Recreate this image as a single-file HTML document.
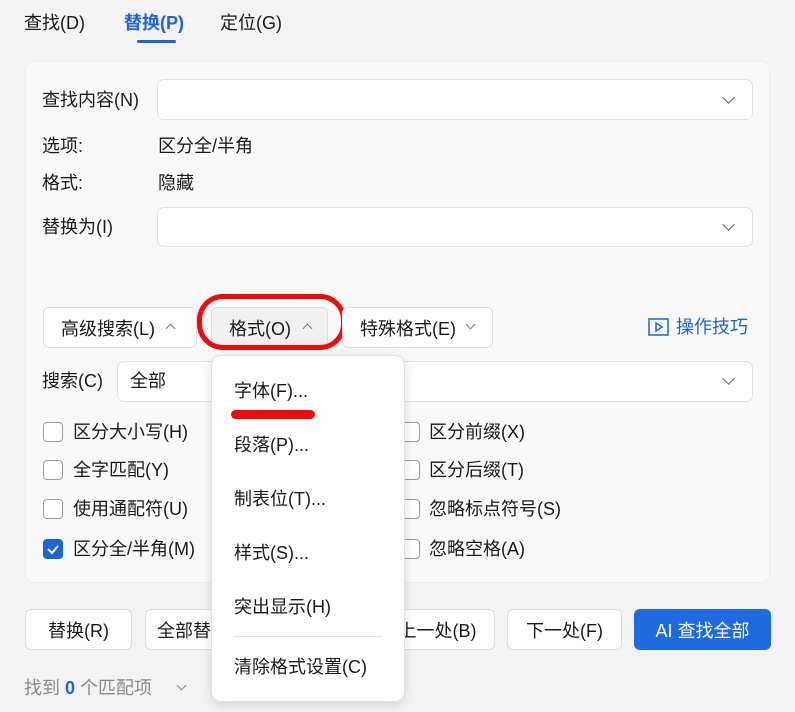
<!DOCTYPE html>
<html><head><meta charset="utf-8"><style>
*{box-sizing:border-box;margin:0;padding:0}
body{width:795px;height:712px;background:#f3f3f3;font-family:"Liberation Sans","Noto Sans CJK SC",sans-serif;font-size:18px;color:#1a1a1a;position:relative;overflow:hidden}
.a{position:absolute;white-space:nowrap}
.panel{position:absolute;left:25px;top:61px;width:745px;height:522px;background:#f9f9f9;border:1px solid #ececec;border-radius:9px}
.inp{position:absolute;background:#fff;border:1px solid #e2e2e2;border-radius:7px}
.btn{position:absolute;background:#fff;border:1px solid #dcdcdc;border-radius:6px;display:flex;align-items:center;justify-content:center;height:41px}
.cb{position:absolute;width:20px;height:20px;border:1px solid #9a9a9a;border-radius:4px;background:#fff}
.chev{position:absolute;width:9px;height:9px;border-right:1.5px solid #666;border-bottom:1.5px solid #666;transform:rotate(45deg)}
.up{position:absolute;width:7px;height:7px;border-left:1.5px solid #777;border-top:1.5px solid #777;transform:rotate(45deg)}
.dn{position:absolute;width:7px;height:7px;border-right:1.5px solid #777;border-bottom:1.5px solid #777;transform:rotate(45deg)}
.lbl{line-height:20px}
</style></head><body>
<div class="a lbl" style="left:24px;top:13px">查找(D)</div>
<div class="a lbl" style="left:124px;top:13px;color:#1f63d6;font-weight:bold">替换(P)</div>
<div class="a" style="left:137px;top:40px;width:39px;height:3px;background:#1f63d6;border-radius:2px"></div>
<div class="a lbl" style="left:220px;top:13px">定位(G)</div>

<div class="panel"></div>
<div class="a lbl" style="left:42px;top:90px">查找内容(N)</div>
<div class="inp" style="left:157px;top:79px;width:596px;height:41px"></div>
<div class="chev" style="left:724px;top:93px"></div>
<div class="a lbl" style="left:42px;top:136px">选项:</div>
<div class="a lbl" style="left:158px;top:136px">区分全/半角</div>
<div class="a lbl" style="left:42px;top:173px">格式:</div>
<div class="a lbl" style="left:158px;top:173px">隐藏</div>
<div class="a lbl" style="left:42px;top:217px">替换为(I)</div>
<div class="inp" style="left:157px;top:207px;width:596px;height:40px"></div>
<div class="chev" style="left:724px;top:220px"></div>

<div class="btn" style="left:43px;top:307px;width:154px;justify-content:flex-start;padding-left:17px">高级搜索(L)</div>
<div class="up" style="left:167px;top:325px"></div>
<div class="btn" style="left:211px;top:307px;width:117px;background:#f0f0f0;justify-content:flex-start;padding-left:17px">格式(O)</div>
<div class="up" style="left:304px;top:325px"></div>
<div class="a" style="left:197px;top:294px;width:149px;height:56px;border:5px solid #f00a0a;border-radius:26px"></div>
<div class="btn" style="left:342px;top:307px;width:151px;justify-content:flex-start;padding-left:17px">特殊格式(E)</div>
<div class="dn" style="left:467px;top:321px"></div>
<svg class="a" style="left:648px;top:318px" width="21" height="18" viewBox="0 0 21 18"><rect x="1" y="1" width="19" height="16" fill="none" stroke="#1f63d6" stroke-width="1.5"/><path d="M8 5v8l6-4z" fill="none" stroke="#1f63d6" stroke-width="1.5"/></svg>
<div class="a lbl" style="left:676px;top:317px;color:#1f63d6">操作技巧</div>

<div class="a lbl" style="left:42px;top:371px">搜索(C)</div>
<div class="inp" style="left:117px;top:361px;width:636px;height:41px"></div>
<div class="a lbl" style="left:130px;top:371px">全部</div>
<div class="chev" style="left:724px;top:374px"></div>

<div class="cb" style="left:43px;top:422px"></div><div class="a lbl" style="left:73px;top:422px">区分大小写(H)</div>
<div class="cb" style="left:43px;top:460px"></div><div class="a lbl" style="left:73px;top:460px">全字匹配(Y)</div>
<div class="cb" style="left:43px;top:499px"></div><div class="a lbl" style="left:73px;top:499px">使用通配符(U)</div>
<div class="cb" style="left:43px;top:539px;background:#1f63d6;border-color:#1f63d6"></div>
<svg class="a" style="left:43px;top:539px" width="20" height="20"><path d="M5 10l4 4 6-7" fill="none" stroke="#fff" stroke-width="2"/></svg>
<div class="a lbl" style="left:73px;top:539px">区分全/半角(M)</div>
<div class="cb" style="left:400px;top:422px"></div><div class="a lbl" style="left:429px;top:422px">区分前缀(X)</div>
<div class="cb" style="left:400px;top:460px"></div><div class="a lbl" style="left:429px;top:460px">区分后缀(T)</div>
<div class="cb" style="left:400px;top:499px"></div><div class="a lbl" style="left:429px;top:499px">忽略标点符号(S)</div>
<div class="cb" style="left:400px;top:539px"></div><div class="a lbl" style="left:429px;top:539px">忽略空格(A)</div>

<div class="btn" style="left:25px;top:609px;width:107px">替换(R)</div>
<div class="btn" style="left:145px;top:609px;width:120px;justify-content:flex-start;padding-left:11px">全部替换</div>
<div class="btn" style="left:380px;top:609px;width:115px">上一处(B)</div>
<div class="btn" style="left:507px;top:609px;width:115px">下一处(F)</div>
<div class="btn" style="left:634px;top:609px;width:137px;background:#1f6ae0;border-color:#1f6ae0;color:#fff">AI 查找全部</div>

<div class="a lbl" style="left:24px;top:678px;color:#888">找到 <span style="color:#1f63d6;font-weight:bold">0</span> 个匹配项</div>
<div class="dn" style="left:178px;top:682px;border-color:#888"></div>

<div class="a" style="left:211px;top:355px;width:194px;height:347px;background:#fff;border:1px solid #e2e2e2;border-radius:10px;box-shadow:0 3px 12px rgba(0,0,0,.12)"></div>
<div class="a lbl" style="left:234px;top:381px">字体(F)...</div>
<div class="a" style="left:231px;top:410px;width:84px;height:9px;background:#f00a0a;border-radius:5px"></div>
<div class="a lbl" style="left:234px;top:435px">段落(P)...</div>
<div class="a lbl" style="left:234px;top:489px">制表位(T)...</div>
<div class="a lbl" style="left:234px;top:543px">样式(S)...</div>
<div class="a lbl" style="left:234px;top:597px">突出显示(H)</div>
<div class="a" style="left:234px;top:636px;width:148px;height:1px;background:#e0e0e0"></div>
<div class="a lbl" style="left:234px;top:657px">清除格式设置(C)</div>
</body></html>
